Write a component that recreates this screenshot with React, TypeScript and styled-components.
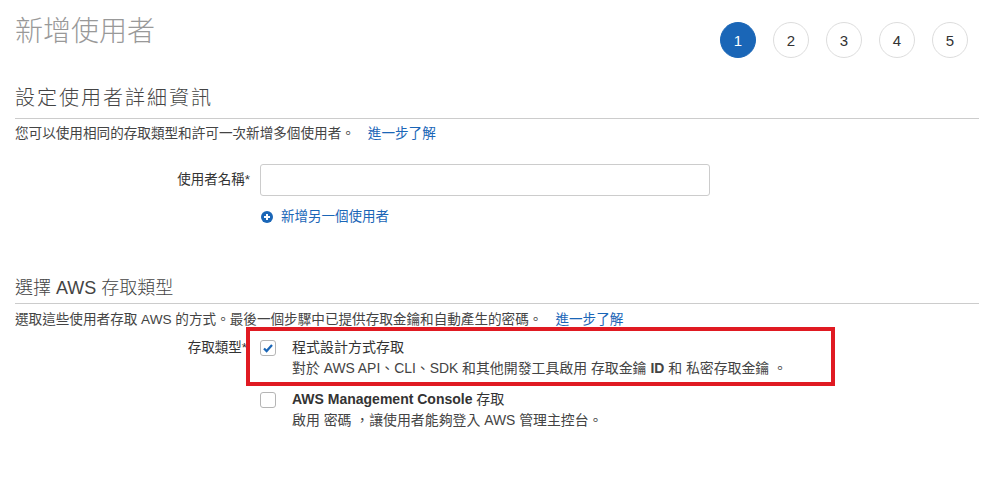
import React from 'react';
import styled, { createGlobalStyle } from 'styled-components';

const GlobalStyle = createGlobalStyle`
  body {
    margin: 0;
    background: #fff;
    font-family: "Liberation Sans", "Noto Sans CJK TC", sans-serif;
    color: #333;
  }
`;

const steps = [1, 2, 3, 4, 5];

const Page = styled.div`
  padding: 0 18px 0 15px;
  width: 986px;
  box-sizing: border-box;
`;

const Header = styled.header`
  display: flex;
  justify-content: space-between;
  align-items: flex-start;
`;

const Title = styled.h1`
  margin: 16px 0 0;
  font-size: 28px;
  line-height: 32px;
  font-weight: 300;
  color: #999;
`;

const Steps = styled.ol`
  display: flex;
  gap: 17px;
  list-style: none;
  margin: 22px 0 0;
  padding: 0;
`;

const Step = styled.li<{ $active?: boolean }>`
  width: 36px;
  height: 36px;
  box-sizing: border-box;
  border-radius: 50%;
  display: flex;
  align-items: center;
  justify-content: center;
  font-size: 15px;
  background: ${(p) => (p.$active ? '#1a66b7' : '#fff')};
  color: ${(p) => (p.$active ? '#fff' : '#333')};
  border: 1px solid ${(p) => (p.$active ? '#1a66b7' : '#ddd')};
`;

const SectionTitle = styled.h2<{ $top: number; $size: number; $lh: number; $pad: number; $spacing?: number }>`
  margin: ${(p) => p.$top}px -11px 0 0;
  padding-bottom: ${(p) => p.$pad}px;
  font-size: ${(p) => p.$size}px;
  letter-spacing: ${(p) => p.$spacing ?? 0}px;
  line-height: ${(p) => p.$lh}px;
  font-weight: 300;
  color: #444;
  border-bottom: 1px solid #ccc;
`;

const Intro = styled.p<{ $top: number }>`
  margin: ${(p) => p.$top}px 0 0;
  font-size: 13.6px;
  line-height: 20px;
  color: #444;
`;

const Link = styled.a`
  color: #1a66b7;
  text-decoration: none;
  margin-left: 13px;
`;

const FormRow = styled.div<{ $top: number }>`
  display: grid;
  grid-template-columns: 235px 1fr;
  column-gap: 10px;
  align-items: start;
  margin-top: ${(p) => p.$top}px;
`;

const Label = styled.label<{ $pad: number; $right?: number }>`
  text-align: right;
  font-size: 13.5px;
  line-height: 20px;
  color: #333;
  padding-top: ${(p) => p.$pad}px;
  padding-right: ${(p) => p.$right ?? 0}px;
`;

const Input = styled.input`
  display: block;
  width: 450px;
  height: 32px;
  box-sizing: border-box;
  border: 1px solid #ccc;
  border-radius: 3px;
  outline: none;
`;

const AddLink = styled.a`
  display: flex;
  align-items: center;
  gap: 8px;
  margin-top: 11px;
  padding-left: 1px;
  font-size: 13.5px;
  line-height: 20px;
  color: #1a66b7;
  text-decoration: none;
`;

const Options = styled.div`
  display: flex;
  flex-direction: column;
  gap: 11px;
`;

const Option = styled.div`
  position: relative;
  display: flex;
  gap: 16px;
`;

const Highlight = styled.span`
  position: absolute;
  left: -14px;
  top: -10px;
  width: 589px;
  height: 59px;
  box-sizing: border-box;
  border: 4px solid #e01a22;
  pointer-events: none;
`;

const Box = styled.span`
  flex: none;
  width: 16px;
  height: 16px;
  margin-top: 3px;
  box-sizing: border-box;
  border: 1px solid #b5b5b5;
  border-radius: 3px;
  display: flex;
  align-items: center;
  justify-content: center;
  background: #fff;
`;

const OptionText = styled.div`
  display: flex;
  flex-direction: column;
  gap: 1px;
`;

const OptionTitle = styled.div`
  font-size: 14px;
  line-height: 20px;
  color: #333;

  b {
    font-weight: 700;
  }
`;

const OptionDesc = styled.div`
  font-size: 13.9px;
  line-height: 20px;
  color: #444;

  b {
    font-weight: 700;
  }
`;

const PlusIcon = () => (
  <svg width="12" height="12" viewBox="0 0 12 12">
    <circle cx="6" cy="6" r="6" fill="#1a66b7" />
    <path d="M6 3v6M3 6h6" stroke="#fff" strokeWidth="2" />
  </svg>
);

const CheckIcon = () => (
  <svg width="12" height="12" viewBox="0 0 12 12">
    <path d="M2 6.5l2.6 2.6L10 3" fill="none" stroke="#1a66b7" strokeWidth="2.2" />
  </svg>
);

export default function App() {
  return (
    <Page>
      <GlobalStyle />
      <Header>
        <Title>新增使用者</Title>
        <Steps>
          {steps.map((s) => (
            <Step key={s} $active={s === 1}>
              {s}
            </Step>
          ))}
        </Steps>
      </Header>

      <SectionTitle $top={25} $size={20} $lh={30} $pad={5} $spacing={2}>
        設定使用者詳細資訊
      </SectionTitle>
      <Intro $top={5}>
        您可以使用相同的存取類型和許可一次新增多個使用者。
        <Link href="#">進一步了解</Link>
      </Intro>

      <FormRow $top={20}>
        <Label $pad={6}>使用者名稱*</Label>
        <div>
          <Input />
          <AddLink href="#">
            <PlusIcon />
            新增另一個使用者
          </AddLink>
        </div>
      </FormRow>

      <SectionTitle $top={49} $size={18} $lh={24} $pad={3}>
        選擇 AWS 存取類型
      </SectionTitle>
      <Intro $top={6}>
        選取這些使用者存取 AWS 的方式。最後一個步驟中已提供存取金鑰和自動產生的密碼。
        <Link href="#">進一步了解</Link>
      </Intro>

      <FormRow $top={7}>
        <Label $pad={1} $right={3}>存取類型*</Label>
        <Options>
          <Option>
            <Highlight />
            <Box>
              <CheckIcon />
            </Box>
            <OptionText>
              <OptionTitle>程式設計方式存取</OptionTitle>
              <OptionDesc>
                對於 AWS API、CLI、SDK 和其他開發工具啟用 存取金鑰 <b>ID</b> 和 私密存取金鑰 。
              </OptionDesc>
            </OptionText>
          </Option>
          <Option>
            <Box />
            <OptionText>
              <OptionTitle>
                <b>AWS Management Console</b> 存取
              </OptionTitle>
              <OptionDesc>啟用 密碼 ，讓使用者能夠登入 AWS 管理主控台。</OptionDesc>
            </OptionText>
          </Option>
        </Options>
      </FormRow>
    </Page>
  );
}
